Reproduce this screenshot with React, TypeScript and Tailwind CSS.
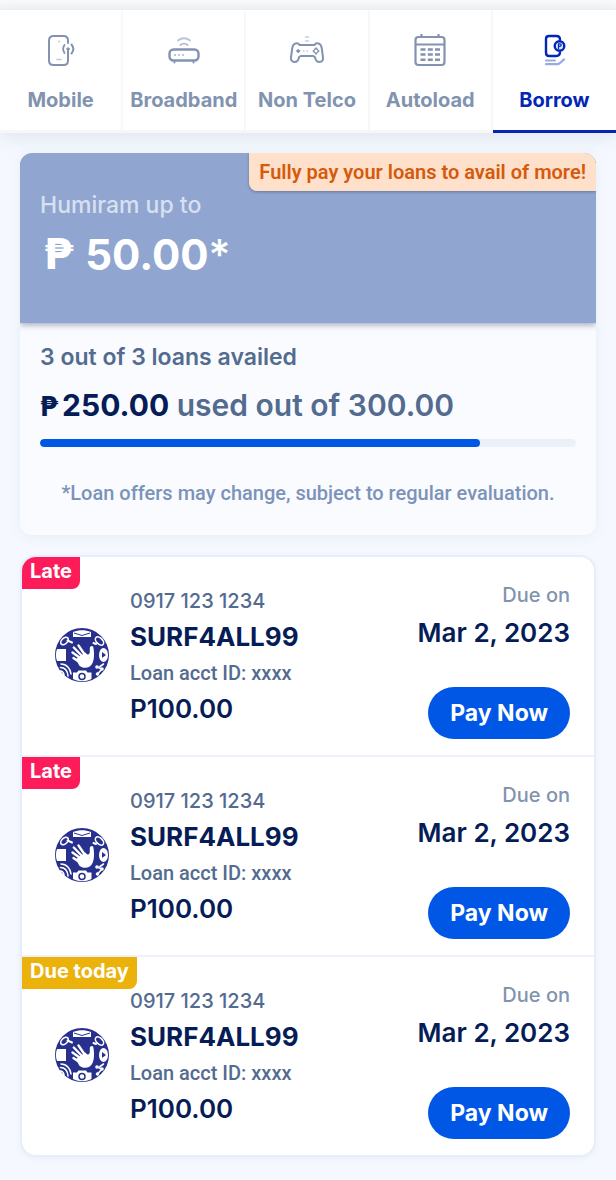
import React, { useState } from 'react';

interface Tab {
  id: string;
  label: string;
  icon: React.ReactNode;
}

interface Loan {
  id: number;
  status: 'late' | 'today';
  phone: string;
  product: string;
  accountId: string;
  amount: string;
  dueDate: string;
}

const MobileIcon = () => (
  <svg width="32" height="36" viewBox="0 0 32 36" fill="none" stroke="currentColor" strokeWidth="2" strokeLinecap="round" aria-hidden="true">
    <path d="M23 11V8.500C23 5.500 21 4 18.500 4H8.500C5.500 4 4 6 4 8.500V28.500C4 31.500 6 33 8.500 33H18.500C21.500 33 23 31 23 28.500V18" />
    <circle cx="23" cy="17" r="1.200" fill="currentColor" strokeWidth="1" />
    <path d="M19.500 13C17.800 15.500 17.800 18.500 19.500 21" strokeWidth="1.800" />
    <path d="M26.500 12.500C29 15.500 29 18.500 26.500 21.500" strokeWidth="2" />
    <path d="M12 27.500H16" strokeWidth="1.500" opacity="0.5" />
    <path d="M14 9.500H14.200" strokeWidth="1.800" opacity="0.5" />
  </svg>
);

const BroadbandIcon = () => (
  <svg width="32" height="36" viewBox="0 0 32 36" fill="none" stroke="currentColor" strokeWidth="2" strokeLinecap="round" aria-hidden="true">
    <rect x="1.500" y="17.500" width="29" height="11" rx="4" strokeWidth="2.400" />
    <path d="M6.500 30.200V30.500M25.500 30.200V30.500" />
    <path d="M7 23H7.100M11 23H11.100M15 23H15.100" strokeWidth="1.800" opacity="0.7" />
    <path d="M10 8.500C13.500 5.500 18.500 5.500 22 8.500" strokeWidth="1.800" opacity="0.55" />
    <path d="M12.500 13C14.500 11.200 17.500 11.200 19.500 13" strokeWidth="1.800" opacity="0.65" />
  </svg>
);

const GamepadIcon = () => (
  <svg width="36" height="36" viewBox="0 0 36 36" fill="none" stroke="currentColor" strokeWidth="2" strokeLinecap="round" strokeLinejoin="round" aria-hidden="true">
    <path d="M10.500 13C9.500 11.200 8 11 6.500 11.500C4.300 12 3.600 14 3.200 16.500L2 25.500C1.700 28.500 3.200 30 5.500 30C8 30 9.300 28.500 9.800 26C10.200 24.200 11 24 12.500 24H23.500C25 24 25.800 24.200 26.200 26C26.700 28.500 28 30 30.500 30C32.800 30 34.300 28.500 34 25.500L32.800 16.500C32.400 14 31.700 12 29.500 11.500C28 11 26.500 11.200 25.500 13Z" />
    <path d="M8 19H10.400M9.200 17.800V20.200" strokeWidth="1.800" />
    <path d="M14.500 19H15M18 19H18.500" strokeWidth="1.400" opacity="0.5" />
    <path d="M27 16.100L29.700 19L27 21.900L24.300 19Z" strokeWidth="1.500" strokeDasharray="2 1.400" />
    <path d="M16.500 5H19.500M16.500 9H19.500" strokeWidth="1.300" opacity="0.45" />
  </svg>
);

const CalendarIcon = () => (
  <svg width="32" height="36" viewBox="0 0 32 36" fill="none" stroke="currentColor" strokeWidth="2.200" strokeLinecap="round" aria-hidden="true">
    <rect x="1.500" y="5" width="29" height="28" rx="3" />
    <path d="M1.500 12.500H30.500M7.500 2V5M24.500 2V5" strokeLinecap="butt" />
    <path
      d="M6.500 17.500H11.500M13.800 17.500H18.800M21 17.500H26M6.500 22.500H11.500M13.800 22.500H18.800M21 22.500H26M6.500 27.700H11.500M13.800 27.700H18.800M21 27.700H26"
      strokeWidth="2.400"
      strokeLinecap="butt"
    />
  </svg>
);

const BorrowIcon = () => (
  <svg width="32" height="36" viewBox="0 0 32 36" fill="none" stroke="currentColor" strokeWidth="2.400" strokeLinecap="round" strokeLinejoin="round" aria-hidden="true">
    <path d="M22 7.500C22 5.200 20.700 4 18.500 4H11C9 4 8 5.200 8 7V20.500C8 22.700 9.200 24 11 24H18.500C20.500 24 21.800 22.500 22 20.500" />
    <circle cx="21.500" cy="14" r="4.800" fill="#dfe5fa" />
    <path d="M20.500 16.800V11.800H21.700C23.700 11.800 23.700 14.400 21.700 14.400H20.500" strokeWidth="1.200" />
    <path d="M8 28.500H17M8 32.200H19C22.500 32.200 23 29.500 26 27.500" strokeWidth="2.200" opacity="0.4" />
  </svg>
);

const SurfLogo = () => (
  <svg width="56" height="56" viewBox="0 0 56 56" fill="none" aria-hidden="true">
    <circle cx="28" cy="28" r="27" fill="#27318d" />
    <g fill="#fff">
      {/* palm */}
      <path d="M22 32L31.500 25.500C33.500 28.500 35.500 28 35.800 25V21C36.200 18.500 38.800 18.300 39.400 20.500C40.300 25.500 40.500 31 38.800 35.500C36.800 40.800 30 42.800 25.200 38.500Z" />
      {/* envelope */}
      <path d="M19 5C25 2.500 31 2.500 37 5V10H19Z" />
      {/* tablet */}
      <path d="M3 22H12V34H3C1.500 30 1.500 26 3 22Z" />
      {/* camera */}
      <path d="M19 45.500H23L24.500 43.500H32L33.500 45.500H37.500V52C31 55 25.500 55 19 52Z" />
      <ellipse cx="49.500" cy="28" rx="4.500" ry="7" />
    </g>
    {/* fingers */}
    <path d="M31 28L24.500 18.500M29 30L19.800 20.500M27.500 32L18.500 25.500M26 35.500L19.500 31" stroke="#fff" strokeWidth="2.400" strokeLinecap="round" />
    <path d="M20 6L28 8.500L36 6" stroke="#27318d" />
    <circle cx="28" cy="49.500" r="3" stroke="#27318d" strokeWidth="1.500" />
    <path d="M48 25V31L52 28Z" fill="#27318d" />
    <g stroke="#fff" strokeWidth="1.600" strokeLinecap="round">
      <ellipse cx="10.500" cy="14" rx="4.500" ry="2.800" transform="rotate(-45 10.500 14)" />
      <path d="M13.500 13.500L18 15.500" strokeWidth="2" />
      <ellipse cx="45.500" cy="14" rx="5" ry="3" transform="rotate(45 45.500 14)" />
      <path d="M42 17L39.500 16" strokeWidth="2" />
      <path d="M6.500 44C8 44 9.500 45.500 10 48M6.500 40.500C10.500 40.500 13.500 43.500 14 49M7 37C12.500 37 16.500 41.500 17 47" />
      <path d="M43 40L48 42L43.500 47M46 39.500L49.500 37" />
    </g>
    <g fill="#fff">
      <circle cx="43" cy="40" r="1.800" />
      <circle cx="48" cy="42" r="1.800" />
      <circle cx="43.500" cy="47" r="1.800" />
    </g>
  </svg>
);

const tabs: Tab[] = [
  { id: 'mobile', label: 'Mobile', icon: <MobileIcon /> },
  { id: 'broadband', label: 'Broadband', icon: <BroadbandIcon /> },
  { id: 'non-telco', label: 'Non Telco', icon: <GamepadIcon /> },
  { id: 'autoload', label: 'Autoload', icon: <CalendarIcon /> },
  { id: 'borrow', label: 'Borrow', icon: <BorrowIcon /> },
];

const baseLoan = {
  phone: '0917 123 1234',
  product: 'SURF4ALL99',
  accountId: 'xxxx',
  amount: 'P100.00',
  dueDate: 'Mar 2, 2023',
};

const loans: Loan[] = [
  { id: 1, status: 'late', ...baseLoan },
  { id: 2, status: 'late', ...baseLoan },
  { id: 3, status: 'today', ...baseLoan },
];

// share of the loan limit shown as used
const usedPercent = 82;

const App = () => {
  const [activeTab, setActiveTab] = useState('borrow');

  return (
    <div className="min-h-screen bg-[#f5f9ff] pb-6 font-['Inter','Liberation_Sans',sans-serif]">
      <div className="h-2.5 bg-linear-to-b from-[#fafbfb] to-[#f3f5f7]"></div>

      <nav className="grid grid-cols-5 bg-white shadow-[0_4px_20px_rgba(30,50,80,0.10)]">
        {tabs.map(tab => (
          <button
            key={tab.id}
            type="button"
            onClick={() => setActiveTab(tab.id)}
            className={`flex flex-col items-center border-b-3 pt-[22px] pb-[18px] ${
              activeTab === tab.id
                ? 'border-b-[#0227b5] text-[#0227b5]'
                : 'border-r-2 border-r-[#f7f8fa] border-b-[#f6f7f9] text-[#8193af]'
            }`}
          >
            {tab.icon}
            <span className="mt-5 text-xl leading-6 font-bold whitespace-nowrap">{tab.label}</span>
          </button>
        ))}
      </nav>

      <main className="px-5 pt-5">
        {/* Resumen */}
        <section className="overflow-hidden rounded-xl bg-[#fafbff] shadow-[0_2px_14px_rgba(30,50,80,0.06)]">
          <div className="relative h-[170px] bg-[#90a6d0] px-5 pt-9 text-white shadow-[0_2px_6px_rgba(30,50,80,0.4)]">
            <p className="absolute top-0 right-0 rounded-bl-lg bg-[#ffe0ca] px-2.5 py-1.5 font-['Roboto',sans-serif] text-xl leading-[26px] font-semibold text-[#d45a0c] shadow-[0_1px_3px_rgba(30,50,80,0.4)]">
              Fully pay your loans to avail of more!
            </p>
            <p className="text-[23px] leading-8 font-medium text-[#d8e0f0]">Humiram up to</p>
            <p className="mt-2 flex items-center gap-3 pl-1 text-[42px] leading-[52px] font-bold">
              <span className="font-['DejaVu_Sans',sans-serif]">₱</span>
              <span>
                50.00<span className="font-medium">*</span>
              </span>
            </p>
          </div>

          <div className="px-5 pt-5 pb-7">
            <p className="text-[23px] leading-7 font-semibold text-[#546b90]">3 out of 3 loans availed</p>
            <p className="mt-4 text-[30px] leading-9 font-semibold text-[#546b90]">
              <span className="font-bold text-[#051c57]">
                <span className="mr-1 font-['DejaVu_Sans',sans-serif] text-[26px] leading-8">₱</span>250.00
              </span>{' '}
              used out of 300.00
            </p>
            <div
              role="progressbar"
              aria-label="Loan amount used"
              aria-valuenow={usedPercent}
              aria-valuemin={0}
              aria-valuemax={100}
              className="mt-4 h-2 overflow-hidden rounded-full bg-[#ecf1f9]"
            >
              <div className="h-full rounded-full bg-[#0057e5]" style={{ width: `${usedPercent}%` }}></div>
            </div>
            <p className="mt-8 text-center font-['Roboto',sans-serif] text-xl leading-7 font-medium text-[#7c93b9]">
              *Loan offers may change, subject to regular evaluation.
            </p>
          </div>
        </section>

        {/* Lista de préstamos */}
        <ul className="mt-5 divide-y-2 divide-[#edf2fa] overflow-hidden rounded-2xl border-2 border-[#e5eefc] bg-white shadow-[0_2px_6px_rgba(30,50,80,0.05)]">
          {loans.map(loan => (
            <li key={loan.id} className="relative flex items-start justify-between pt-[26px] pr-6 pb-4 pl-8">
              <span
                className={`absolute top-0 left-0 rounded-br-lg px-2 pb-1 text-xl leading-7 font-bold text-white ${
                  loan.status === 'late' ? 'bg-[#fd1c59]' : 'bg-[#ebb20c]'
                }`}
              >
                {loan.status === 'late' ? 'Late' : 'Due today'}
              </span>
              <div className="flex items-center gap-5">
                <SurfLogo />
                <div className="text-[#051c57]">
                  <p className="text-xl leading-9 font-medium text-[#546b90]">{loan.phone}</p>
                  <p className="text-[26px] leading-9 font-bold">{loan.product}</p>
                  <p className="font-['Roboto',sans-serif] text-xl leading-9 font-medium text-[#546b90]">
                    Loan acct ID: {loan.accountId}
                  </p>
                  <p className="text-[26px] leading-9 font-semibold">{loan.amount}</p>
                </div>
              </div>
              <div className="flex flex-col items-end">
                <p className="text-xl leading-6 font-medium text-[#8193af]">Due on</p>
                <p className="mt-2 text-[26px] leading-9 font-semibold text-[#051c57]">{loan.dueDate}</p>
                <button type="button" className="mt-9 h-[52px] rounded-full bg-[#0057e5] px-[22px] text-[23px] font-bold text-white">
                  Pay Now
                </button>
              </div>
            </li>
          ))}
        </ul>
      </main>
    </div>
  );
};

export default App;
